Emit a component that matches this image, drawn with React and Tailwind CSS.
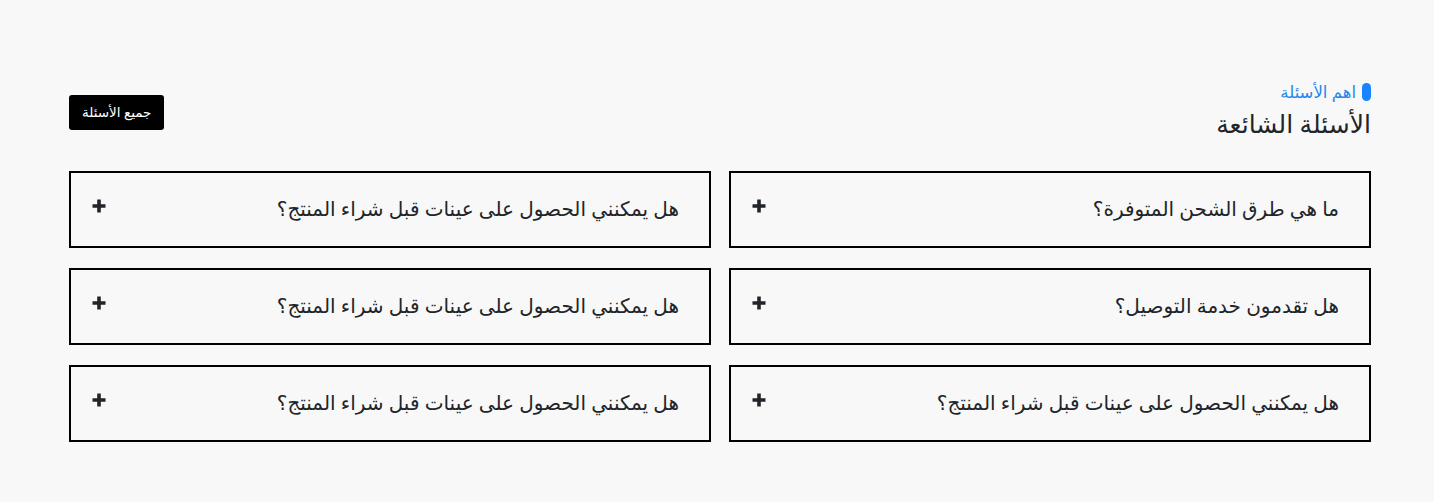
import React from "react";

const items = [
  "هل يمكنني الحصول على عينات قبل شراء المنتج؟",
  "ما هي طرق الشحن المتوفرة؟",
  "هل يمكنني الحصول على عينات قبل شراء المنتج؟",
  "هل تقدمون خدمة التوصيل؟",
  "هل يمكنني الحصول على عينات قبل شراء المنتج؟",
  "هل يمكنني الحصول على عينات قبل شراء المنتج؟",
];

function Plus() {
  return (
    <svg width="16" height="16" viewBox="0 0 16 16" className="shrink-0">
      <path d="M8 1.5v13M1.5 8h13" stroke="#212529" strokeWidth="3.6" fill="none" />
    </svg>
  );
}

export default function App() {
  return (
    <div
      className="w-[1434px] h-[502px] bg-[#f8f8f8] text-[#212529]"
      style={{ fontFamily: "'Noto Sans', 'DejaVu Sans', sans-serif" }}
    >
      <div className="ml-[69px] w-[1302px] pt-[82px]">
        <div className="flex items-start justify-between">
          <button className="bg-black text-white text-[13.5px] rounded-[3px] h-[35px] px-[13px] leading-none mt-[13px]">
            جميع الأسئلة
          </button>
          <div dir="rtl" className="flex flex-col items-start">
            <div className="flex items-center gap-[6px] text-[#1e88f0] text-[16.5px] leading-[20px]">
              <span className="block w-[9px] h-[18px] rounded-full bg-[#1a84ff]"></span>
              <span>اهم الأسئلة</span>
            </div>
            <div className="text-[25px] leading-[34px] mt-[4px] text-[#212529]">الأسئلة الشائعة</div>
          </div>
        </div>
        <div dir="rtl" className="grid grid-cols-2 gap-x-[18px] gap-y-[20px] mt-[31px]">
          {[1, 0, 3, 2, 5, 4].map((i, k) => (
            <div
              key={k}
              className="border-2 border-black h-[77px] flex items-start justify-between pr-[30px] pl-[20px]"
            >
              <span className="text-[20px] leading-[26px] mt-[23px]">{items[i]}</span>
              <span className="mt-[25px]"><Plus /></span>
            </div>
          ))}
        </div>
      </div>
    </div>
  );
}
